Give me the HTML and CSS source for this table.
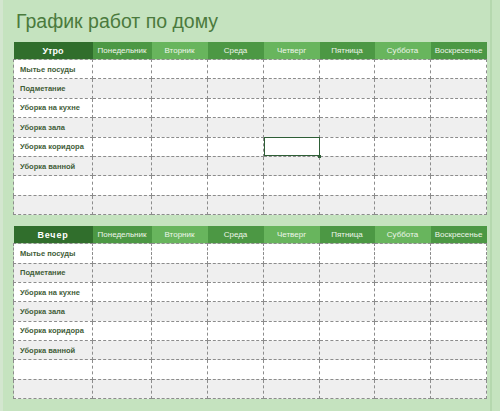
FILE: index.html
```html
<!DOCTYPE html>
<html lang="ru">
<head>
<meta charset="utf-8">
<link rel="stylesheet" href="styles.css">
</head>
<body>
<div class="page">
  <h1 class="title">График работ по дому</h1>
  <table class="sched">
    <colgroup><col class="c0"><col class="c1"><col class="c2"><col class="c3"><col class="c4"><col class="c5"><col class="c6"><col class="c7"></colgroup>
    <thead><tr>
      <th class="h0">Утро</th><th class="hm">Понедельник</th><th class="hl">Вторник</th><th class="hm">Среда</th><th class="hl">Четверг</th><th class="hm">Пятница</th><th class="hl">Суббота</th><th class="hm">Воскресенье</th>
    </tr></thead>
    <tbody>
      <tr><td class="lab">Мытье посуды</td><td></td><td></td><td></td><td></td><td></td><td></td><td></td></tr>
      <tr><td class="lab">Подметание</td><td></td><td></td><td></td><td></td><td></td><td></td><td></td></tr>
      <tr><td class="lab">Уборка на кухне</td><td></td><td></td><td></td><td></td><td></td><td></td><td></td></tr>
      <tr><td class="lab">Уборка зала</td><td></td><td></td><td></td><td></td><td></td><td></td><td></td></tr>
      <tr><td class="lab">Уборка коридора</td><td></td><td></td><td></td><td class="sel"><span class="handle"></span></td><td></td><td></td><td></td></tr>
      <tr><td class="lab">Уборка ванной</td><td></td><td></td><td></td><td></td><td></td><td></td><td></td></tr>
      <tr><td class="lab"></td><td></td><td></td><td></td><td></td><td></td><td></td><td></td></tr>
      <tr><td class="lab"></td><td></td><td></td><td></td><td></td><td></td><td></td><td></td></tr>
    </tbody>
  </table>
  <table class="sched second">
    <colgroup><col class="c0"><col class="c1"><col class="c2"><col class="c3"><col class="c4"><col class="c5"><col class="c6"><col class="c7"></colgroup>
    <thead><tr>
      <th class="h0 wide">Вечер</th><th class="hm">Понедельник</th><th class="hl">Вторник</th><th class="hm">Среда</th><th class="hl">Четверг</th><th class="hm">Пятница</th><th class="hl">Суббота</th><th class="hm">Воскресенье</th>
    </tr></thead>
    <tbody>
      <tr><td class="lab">Мытье посуды</td><td></td><td></td><td></td><td></td><td></td><td></td><td></td></tr>
      <tr><td class="lab">Подметание</td><td></td><td></td><td></td><td></td><td></td><td></td><td></td></tr>
      <tr><td class="lab">Уборка на кухне</td><td></td><td></td><td></td><td></td><td></td><td></td><td></td></tr>
      <tr><td class="lab">Уборка зала</td><td></td><td></td><td></td><td></td><td></td><td></td><td></td></tr>
      <tr><td class="lab">Уборка коридора</td><td></td><td></td><td></td><td></td><td></td><td></td><td></td></tr>
      <tr><td class="lab">Уборка ванной</td><td></td><td></td><td></td><td></td><td></td><td></td><td></td></tr>
      <tr><td class="lab"></td><td></td><td></td><td></td><td></td><td></td><td></td><td></td></tr>
      <tr><td class="lab"></td><td></td><td></td><td></td><td></td><td></td><td></td><td></td></tr>
    </tbody>
  </table>
</div>
</body>
</html>
```
FILE: styles.css
```css
html, body {
  margin: 0;
  padding: 0;
  background: #c5e3bf;
}
body {
  width: 500px;
  height: 411px;
  overflow: hidden;
  font-family: "Liberation Sans", Arial, sans-serif;
}
.page {
  box-sizing: border-box;
  width: 492px;
  height: 411px;
  padding: 8px 0 0 10px;
  border-left: 3px solid #d3e6cf;
  border-right: 2px solid #b5d8ae;
}
.title {
  margin: 0 0 0 3px;
  font-weight: normal;
  font-size: 19.5px;
  line-height: 26px;
  color: #4b7a3d;
  height: 34px;
}
.sched {
  border-collapse: collapse;
  table-layout: fixed;
  width: 473px;
}
.second {
  margin-top: 11px;
}
.c0 { width: 79px; }
.c1 { width: 59px; }
.c2 { width: 56px; }
.c3 { width: 56px; }
.c4 { width: 56px; }
.c5 { width: 55px; }
.c6 { width: 56px; }
.c7 { width: 56px; }
.sched th {
  height: 17px;
  padding: 0;
  font-size: 8px;
  font-weight: normal;
  color: #eef6ea;
  text-align: center;
  white-space: nowrap;
  overflow: hidden;
}
.sched .h0 {
  background: #306e2c;
  color: #ffffff;
  font-weight: bold;
  font-size: 9px;
}
.sched .wide { letter-spacing: 0.8px; }
.sched .hm { background: #4c9844; }
.sched .hl { background: #68b55d; }
.sched td {
  height: 18.4px;
  padding: 0;
  border: 1px dashed #8c8c8c;
  background: #ffffff;
}
.sched tbody tr:nth-child(even) td {
  background: #efefef;
}
.sched .lab {
  font-size: 7.5px;
  font-weight: bold;
  color: #3f5d38;
  padding-left: 6px;
  white-space: nowrap;
}
.sched .sel {
  position: relative;
  outline: 1px solid #2e5e36;
  outline-offset: -1px;
}
.handle {
  position: absolute;
  right: -2px;
  bottom: -2px;
  width: 3px;
  height: 3px;
  background: #2e5e36;
}
```
